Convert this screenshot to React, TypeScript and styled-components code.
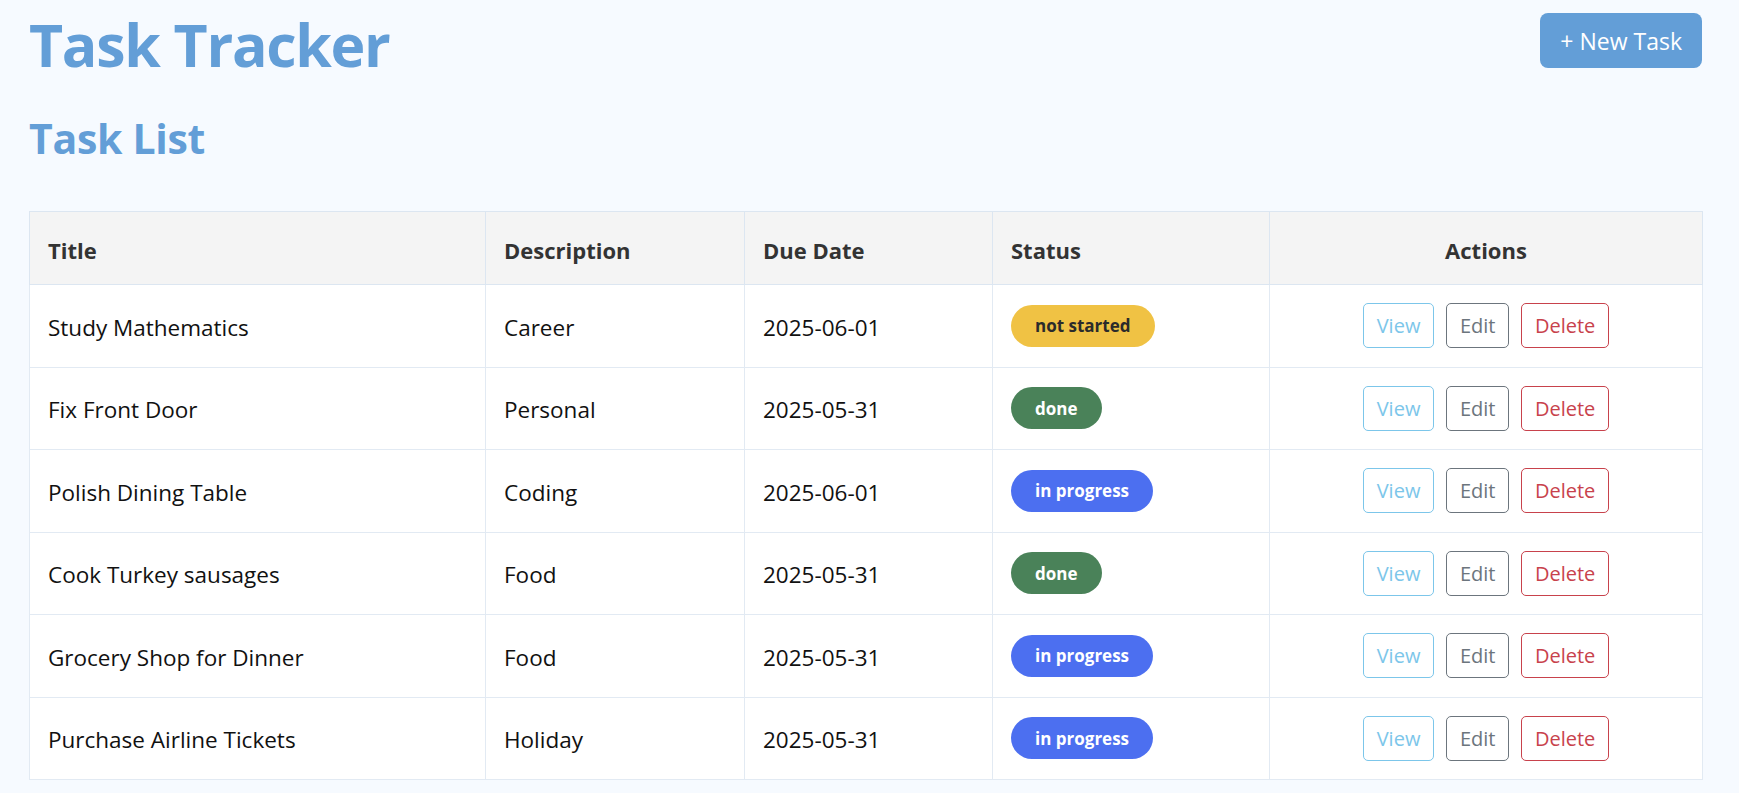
import React from "react";
import styled, { createGlobalStyle } from "styled-components";

const GlobalStyle = createGlobalStyle`
  html, body {
    margin: 0;
    padding: 0;
    background: #f6faff;
    font-family: "Open Sans", "Noto Sans", sans-serif;
  }
  * { box-sizing: border-box; }
`;

const Page = styled.div`
  padding: 13px 37px 20px 29px;
`;

const Header = styled.header`
  display: flex;
  justify-content: space-between;
  align-items: flex-start;
`;

const Title = styled.h1`
  margin: 2px 0 0 0;
  font-size: 59px;
  line-height: 1;
  font-weight: 700;
  color: #639ed7;
  letter-spacing: -1.3px;
`;

const PrimaryButton = styled.button`
  height: 55px;
  padding: 0 20px;
  border: none;
  border-radius: 8px;
  background: #639ed7;
  color: #ffffff;
  font-family: inherit;
  font-size: 23px;
  cursor: pointer;
`;

const SectionTitle = styled.h2`
  margin: 44px 0 0 0;
  font-size: 41px;
  line-height: 1;
  font-weight: 700;
  color: #639ed7;
  letter-spacing: -0.3px;
`;

const Table = styled.table`
  margin-top: 52px;
  width: 100%;
  border-collapse: collapse;
  background: #ffffff;
  border: 1px solid #dce6f1;
  table-layout: fixed;
`;

const HeadCell = styled.th<{ $width: number; $center?: boolean }>`
  width: ${(p) => p.$width}px;
  padding: 21px 18px 17px;
  background: #f4f4f4;
  border: 1px solid #dce6f1;
  color: #333333;
  font-size: 22px;
  line-height: 34px;
  font-weight: 700;
  text-align: ${(p) => (p.$center ? "center" : "left")};
`;

const Cell = styled.td<{ $center?: boolean; $text?: boolean }>`
  padding: ${(p) => (p.$text ? "20px 18px 16px" : "18.25px 18px")};
  border: 1px solid #e2eaf3;
  color: #111111;
  font-size: 22.5px;
  line-height: 30px;
  vertical-align: middle;
  text-align: ${(p) => (p.$center ? "center" : "left")};
`;

const statusColors: Record<string, { bg: string; fg: string }> = {
  "not started": { bg: "#f0c244", fg: "#2b2b2b" },
  done: { bg: "#4a8259", fg: "#ffffff" },
  "in progress": { bg: "#4c6ff0", fg: "#ffffff" },
};

const Badge = styled.span<{ $status: string }>`
  display: inline-block;
  padding: 7.5px 24px;
  border-radius: 21px;
  background: ${(p) => statusColors[p.$status].bg};
  color: ${(p) => statusColors[p.$status].fg};
  font-size: 17px;
  line-height: 27px;
  font-weight: 700;
`;

const Actions = styled.div`
  display: flex;
  justify-content: center;
  gap: 12.5px;
`;

const actionColors: Record<string, { border: string; fg: string }> = {
  view: { border: "#7cc6ea", fg: "#7cc6ea" },
  edit: { border: "#6c757d", fg: "#6c757d" },
  delete: { border: "#c8424c", fg: "#c8424c" },
};

const ActionButton = styled.button<{ $kind: string }>`
  height: 45px;
  padding: 0 12.5px;
  border: 1px solid ${(p) => actionColors[p.$kind].border};
  border-radius: 5px;
  background: transparent;
  color: ${(p) => actionColors[p.$kind].fg};
  font-family: inherit;
  font-size: 20px;
  cursor: pointer;
`;

const tasks = [
  { title: "Study Mathematics", desc: "Career", due: "2025-06-01", status: "not started" },
  { title: "Fix Front Door", desc: "Personal", due: "2025-05-31", status: "done" },
  { title: "Polish Dining Table", desc: "Coding", due: "2025-06-01", status: "in progress" },
  { title: "Cook Turkey sausages", desc: "Food", due: "2025-05-31", status: "done" },
  { title: "Grocery Shop for Dinner", desc: "Food", due: "2025-05-31", status: "in progress" },
  { title: "Purchase Airline Tickets", desc: "Holiday", due: "2025-05-31", status: "in progress" },
];

export default function App() {
  return (
    <>
      <GlobalStyle />
      <Page>
        <Header>
          <Title>Task Tracker</Title>
          <PrimaryButton>+ New Task</PrimaryButton>
        </Header>
        <SectionTitle>Task List</SectionTitle>
        <Table>
          <thead>
            <tr>
              <HeadCell $width={456}>Title</HeadCell>
              <HeadCell $width={259}>Description</HeadCell>
              <HeadCell $width={248}>Due Date</HeadCell>
              <HeadCell $width={277}>Status</HeadCell>
              <HeadCell $width={433} $center>
                Actions
              </HeadCell>
            </tr>
          </thead>
          <tbody>
            {tasks.map((t) => (
              <tr key={t.title}>
                <Cell $text>{t.title}</Cell>
                <Cell $text>{t.desc}</Cell>
                <Cell $text>{t.due}</Cell>
                <Cell>
                  <Badge $status={t.status}>{t.status}</Badge>
                </Cell>
                <Cell $center>
                  <Actions>
                    <ActionButton $kind="view">View</ActionButton>
                    <ActionButton $kind="edit">Edit</ActionButton>
                    <ActionButton $kind="delete">Delete</ActionButton>
                  </Actions>
                </Cell>
              </tr>
            ))}
          </tbody>
        </Table>
      </Page>
    </>
  );
}
